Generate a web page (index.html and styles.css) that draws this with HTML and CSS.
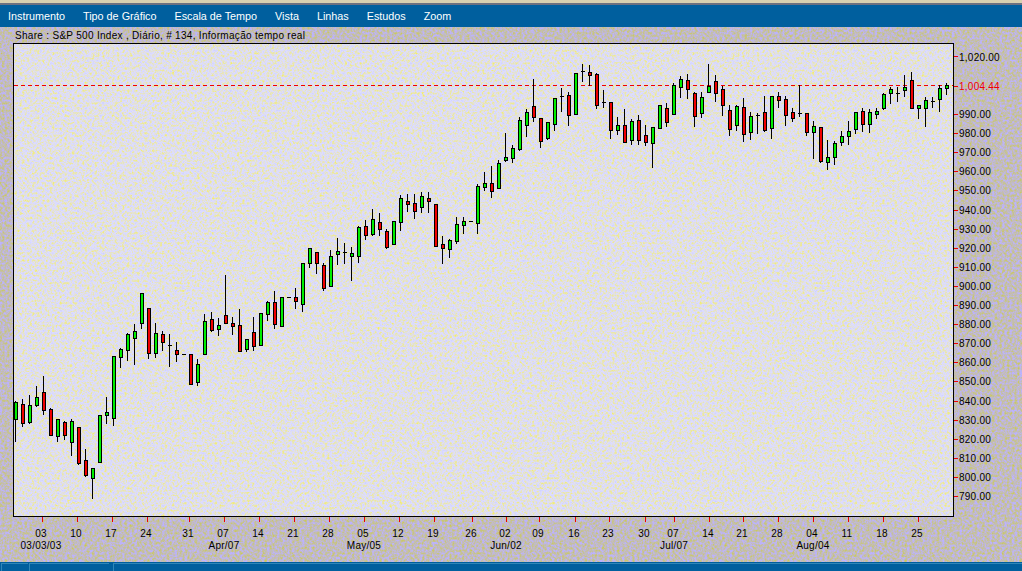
FILE: index.html
```html
<!DOCTYPE html>
<html>
<head>
    <title>S&amp;P 500 Index</title>
    <link rel="stylesheet" href="styles.css">
</head>
<body>
    <div class="top-edge"></div>
    <div class="menubar">
        <span>Instrumento</span>
        <span>Tipo de Gráfico</span>
        <span>Escala de Tempo</span>
        <span>Vista</span>
        <span>Linhas</span>
        <span>Estudos</span>
        <span>Zoom</span>
    </div>
    <div class="caption">Share : S&amp;P 500 Index , Diário, # 134, Informação tempo real</div>
    <svg id="chart" class="chart" width="1022" height="522" viewBox="0 40 1022 522">
        <defs>
            <filter id="paper" x="0" y="0" width="100%" height="100%" color-interpolation-filters="sRGB">
                <feTurbulence type="fractalNoise" baseFrequency="0.4" numOctaves="3" seed="7"/>
                <feColorMatrix type="matrix" values="0.2 0 0 0 0.78  0.15 0 0 0 0.8  -1.3 0 0 0 1.56  0 0 0 0 1"/>
            </filter>
        </defs>
        <rect x="13" y="43" width="941" height="474" filter="url(#paper)"/>
        <g id="last-price"></g>
        <g id="candles"></g>
        <rect class="plot-border" x="13.5" y="43.5" width="940" height="473"/>
        <g id="axes"></g>
    </svg>
    <div class="statusbar">
        <div class="cell cell-a"></div>
        <div class="cell cell-b"></div>
        <div class="cell cell-c"></div>
    </div>
    <script src="script.js"></script>
</body>
</html>
```

FILE: styles.css
```css
body {
    margin: 0;
    width: 1022px;
    height: 571px;
    overflow: hidden;
    display: flex;
    flex-direction: column;
    font-family: "Liberation Sans", Arial, sans-serif;
    background-color: #c3bebc;
    background-image: url("data:image/svg+xml,%3Csvg xmlns='http://www.w3.org/2000/svg' width='1022' height='571'%3E%3Cfilter id='n' x='0' y='0' width='100%25' height='100%25' color-interpolation-filters='sRGB'%3E%3CfeTurbulence type='fractalNoise' baseFrequency='0.4' numOctaves='3' seed='3'/%3E%3CfeColorMatrix type='matrix' values='0.1 0 0 0 0.71  0.15 0 0 0 0.66  -1.1 0 0 0 1.3  0 0 0 0 1'/%3E%3C/filter%3E%3Crect width='1022' height='571' filter='url(%23n)'/%3E%3C/svg%3E");
}
.top-edge {
    height: 3px;
    background-color: #d8d0b0;
    border-bottom: 2px solid #6c7080;
}
.menubar {
    height: 21px;
    padding: 0 0 1px 8px;
    display: flex;
    align-items: center;
    gap: 18px;
    background-color: #005f9e;
    color: #fff;
    font-size: 10.8px;
}
.caption {
    height: 13px;
    padding: 2px 0 0 15px;
    box-sizing: border-box;
    font-size: 10px;
    line-height: 13px;
    letter-spacing: 0.3px;
    color: #000;
}
.chart {
    display: block;
    flex: none;
}
.plot-border {
    fill: none;
    stroke: #000;
    shape-rendering: crispEdges;
}
.candles-rect {
    shape-rendering: crispEdges;
}
.tick {
    fill: #f00000;
    shape-rendering: crispEdges;
}
.axis-label {
    font-size: 10px;
    letter-spacing: 0.25px;
    fill: #000;
}
.axis-label.price-now {
    fill: #f00000;
}
.statusbar {
    flex: 1;
    display: flex;
    gap: 1px;
    padding: 1px 0 0 1px;
    background-color: #005f9e;
}
.cell {
    border-top: 1px solid #2f86b8;
    border-left: 1px solid #2f86b8;
}
.cell-a {
    width: 26px;
}
.cell-b {
    width: 79px;
    margin-right: 3px;
}
.cell-c {
    flex: 1;
}
```

FILE: script.js
```js
// each candle: wick top, wick bottom, body top, body bottom, colour (page pixels)
const candles = [
    [401,441,402,419,'g'],[399,426,404,423,'r'],[395,423,405,422,'g'],[386,406,397,405,'g'],[376,414,392,410,'r'],
    [408,435,409,435,'r'],[419,441,419,436,'g'],[421,439,422,435,'r'],[419,455,421,442,'g'],[427,464,427,463,'r'],
    [449,476,460,475,'r'],[468,498,468,478,'g'],[415,462,415,462,'g'],[397,423,412,415,'g'],[356,425,356,418,'g'],
    [348,367,349,357,'g'],[333,360,334,350,'g'],[324,364,331,338,'g'],[293,328,293,323,'g'],[308,358,308,353,'r'],
    [323,357,333,353,'g'],[331,350,334,342,'r'],[334,366,345,345,'k'],[342,361,350,354,'r'],[354,354,354,354,'k'],
    [354,384,354,384,'r'],[359,385,364,382,'g'],[314,354,321,354,'g'],[312,331,319,330,'r'],[318,335,325,329,'g'],
    [275,323,315,323,'r'],[317,334,323,326,'r'],[309,351,325,351,'r'],[339,351,339,349,'g'],[317,350,332,346,'r'],
    [313,345,313,345,'g'],[301,320,302,314,'g'],[291,328,302,324,'r'],[297,326,297,326,'g'],[297,297,297,297,'k'],
    [288,308,297,301,'r'],[263,311,263,304,'g'],[248,267,248,263,'g'],[252,273,252,263,'r'],[263,290,265,288,'r'],
    [250,286,256,286,'g'],[238,264,251,254,'g'],[243,263,252,252,'k'],[247,280,253,256,'g'],[226,262,227,256,'g'],
    [220,239,226,235,'r'],[209,235,219,234,'g'],[213,235,222,229,'r'],[229,248,231,247,'r'],[221,244,221,244,'g'],
    [195,230,198,222,'g'],[194,211,201,204,'r'],[194,218,203,211,'r'],[192,212,196,207,'g'],[192,212,198,201,'r'],
    [204,246,204,246,'r'],[236,263,244,248,'r'],[239,257,240,249,'g'],[217,243,224,241,'g'],[217,233,221,225,'g'],
    [221,221,221,221,'k'],[184,233,186,223,'g'],[172,190,183,187,'g'],[166,197,183,191,'r'],[160,188,163,188,'g'],
    [133,161,157,160,'g'],[145,162,148,158,'g'],[117,150,120,149,'g'],[109,136,112,125,'g'],[79,121,106,117,'r'],
    [118,147,118,141,'r'],[122,139,122,138,'g'],[98,130,98,124,'g'],[88,111,96,96,'k'],[92,125,95,115,'r'],
    [73,114,73,114,'g'],[64,81,71,71,'k'],[65,85,72,75,'r'],[73,108,74,105,'r'],[90,107,102,102,'k'],
    [102,138,102,130,'r'],[117,134,125,130,'g'],[109,142,125,142,'r'],[119,144,121,140,'g'],[115,144,120,140,'r'],
    [125,145,135,142,'r'],[127,167,127,143,'g'],[105,128,105,128,'g'],[103,126,108,122,'r'],[83,114,85,114,'g'],
    [76,97,79,87,'g'],[74,98,80,89,'r'],[92,126,93,116,'r'],[92,117,97,113,'g'],[64,92,86,92,'g'],
    [75,101,81,93,'r'],[86,115,89,105,'r'],[105,135,110,129,'r'],[105,130,106,125,'g'],[98,141,107,134,'r'],
    [112,139,116,132,'g'],[113,133,115,115,'k'],[96,131,112,130,'r'],[96,138,96,128,'g'],[92,107,96,100,'r'],
    [96,125,99,115,'r'],[108,121,112,118,'r'],[85,116,113,113,'k'],[113,135,113,132,'r'],[121,158,126,132,'g'],
    [127,162,127,161,'r'],[140,169,157,162,'g'],[141,164,143,157,'g'],[131,145,136,142,'g'],[121,144,131,136,'g'],
    [112,133,112,129,'g'],[108,131,111,124,'r'],[109,132,112,124,'g'],[108,118,111,114,'g'],[93,109,94,108,'g'],
    [87,103,89,93,'g'],[87,101,93,93,'k'],[75,96,87,90,'g'],[72,108,80,108,'r'],[105,118,105,108,'g'],
    [97,126,100,108,'g'],[97,107,101,101,'k'],[85,111,88,99,'g'],[83,94,85,88,'g']
];

const SVG_NS = 'http://www.w3.org/2000/svg';
const FILLS = { g: '#00ee00', r: '#f00000' };

function addRect(parent, x, y, w, h, fill, cls) {
    const r = document.createElementNS(SVG_NS, 'rect');
    r.setAttribute('x', x);
    r.setAttribute('y', y);
    r.setAttribute('width', w);
    r.setAttribute('height', h);
    if (fill) r.setAttribute('fill', fill);
    r.setAttribute('class', cls || 'candles-rect');
    parent.appendChild(r);
}

function addText(parent, x, y, label, anchor, cls) {
    const t = document.createElementNS(SVG_NS, 'text');
    t.setAttribute('x', x);
    t.setAttribute('y', y);
    t.setAttribute('text-anchor', anchor);
    t.setAttribute('class', cls || 'axis-label');
    t.textContent = label;
    parent.appendChild(t);
}

// dashed last price line, behind the candles
const lastPrice = document.getElementById('last-price');
for (let x = 14; x < 953; x += 7) {
    addRect(lastPrice, x, 85, Math.min(4, 953 - x), 1, null, 'tick');
}

const candleGroup = document.getElementById('candles');
candles.forEach(function (c, i) {
    const x = 15 + 7 * i;
    const h = c[3] - c[2] + 1;
    if (c[1] > c[0]) addRect(candleGroup, x, c[0], 1, c[1] - c[0] + 1, '#000');
    addRect(candleGroup, Math.max(x - 1, 14), c[2], 4, h, '#000');
    if (c[4] !== 'k' && h > 2) addRect(candleGroup, Math.max(x, 15), c[2] + 1, 2, h - 2, FILLS[c[4]]);
});

const axes = document.getElementById('axes');

// price axis, 10 points every 19.1 pixels
function priceY(v) {
    return 114 + (990 - v) * 1.91;
}
addRect(axes, 954, 56, 4, 1, null, 'tick');
addText(axes, 959, 60.5, '1,020.00', 'start');
addRect(axes, 954, 86, 4, 1, null, 'tick');
addText(axes, 959, 90, '1,004.44', 'start', 'axis-label price-now');
for (let v = 990; v >= 790; v -= 10) {
    const y = Math.round(priceY(v));
    addRect(axes, 954, y, 4, 1, null, 'tick');
    addText(axes, 959, y + 4, v + '.00', 'start');
}

// date axis
const days = [
    [42,'03'],[77,'10'],[112,'17'],[147,'24'],[189,'31'],[224,'07'],[259,'14'],[294,'21'],[329,'28'],
    [364,'05'],[399,'12'],[434,'19'],[472,'26'],[506,'02'],[539,'09'],[575,'16'],[609,'23'],[645,'30'],
    [674,'07'],[709,'14'],[743,'21'],[778,'28'],[813,'04'],[848,'11'],[883,'18'],[918,'25']
];
days.forEach(function (d) {
    addRect(axes, d[0], 517, 1, 5, null, 'tick');
    addText(axes, d[0] - 1, 537, d[1], 'middle');
});
[[41,'03/03/03'],[224,'Apr/07'],[364,'May/05'],[506,'Jun/02'],[674,'Jul/07'],[813,'Aug/04']].forEach(function (m) {
    addText(axes, m[0], 549, m[1], 'middle');
});
```
